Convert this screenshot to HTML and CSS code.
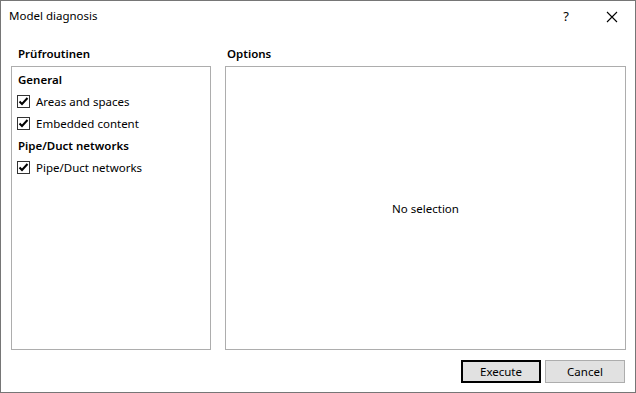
FILE: index.html
```html
<!DOCTYPE html>
<html lang="en">

<head>
  <meta charset="UTF-8" />
  <title>Model diagnosis</title>
  <link rel="stylesheet" href="styles.css">
</head>

<body>
  <div class="window">
    <div class="titlebar">
      <span class="title">Model diagnosis</span>
      <span class="tb-btn help">?</span>
      <span class="tb-btn close">
        <svg width="12" height="12" viewBox="0 0 12 12">
          <path d="M1 1 L11 11 M11 1 L1 11" stroke="#000" stroke-width="1.1" fill="none" />
        </svg>
      </span>
    </div>

    <div class="main">
      <div class="column left">
        <div class="label">Prüfroutinen</div>
        <div class="panel list">
          <div class="group">General</div>
          <label class="check-row">
            <span class="box">
              <svg width="11" height="11" viewBox="0 0 11 11">
                <polyline points="1.5,5.5 4,8 9.5,2" stroke="#000" stroke-width="2" fill="none" />
              </svg>
            </span>
            Areas and spaces
          </label>
          <label class="check-row">
            <span class="box">
              <svg width="11" height="11" viewBox="0 0 11 11">
                <polyline points="1.5,5.5 4,8 9.5,2" stroke="#000" stroke-width="2" fill="none" />
              </svg>
            </span>
            Embedded content
          </label>
          <div class="group">Pipe/Duct networks</div>
          <label class="check-row">
            <span class="box">
              <svg width="11" height="11" viewBox="0 0 11 11">
                <polyline points="1.5,5.5 4,8 9.5,2" stroke="#000" stroke-width="2" fill="none" />
              </svg>
            </span>
            Pipe/Duct networks
          </label>
        </div>
      </div>

      <div class="column right">
        <div class="label">Options</div>
        <div class="panel options">
          <span>No selection</span>
        </div>
      </div>
    </div>

    <div class="footer">
      <button class="btn default">Execute</button>
      <button class="btn">Cancel</button>
    </div>
  </div>
</body>

</html>
```

FILE: styles.css
```css
html,
body {
  margin: 0;
  padding: 0;
  background-color: #ffffff;
  font-family: 'Noto Sans', 'Open Sans', sans-serif;
  font-size: 11.5px;
  color: #000000;
}

.window {
  width: 636px;
  height: 393px;
  box-sizing: border-box;
  border: 1px solid #767676;
  display: flex;
  flex-direction: column;
}

.titlebar {
  height: 31px;
  display: flex;
  align-items: center;
  padding-left: 8px;
}

.title {
  flex: 1;
  padding-bottom: 2px;
}

.tb-btn {
  width: 46px;
  height: 31px;
  display: flex;
  align-items: center;
  justify-content: center;
}

.help {
  font-size: 13px;
  padding-bottom: 2px;
  box-sizing: border-box;
}

.main {
  display: flex;
  gap: 14px;
  padding: 0 9px 0 10px;
}

.column {
  display: flex;
  flex-direction: column;
}

.left {
  width: 200px;
}

.right {
  flex: 1;
}

.label {
  font-weight: 600;
  height: 34px;
  line-height: 20px;
  padding-top: 12px;
  box-sizing: border-box;
}

.left .label {
  padding-left: 7px;
}

.right .label {
  padding-left: 2px;
}

.panel {
  height: 284px;
  box-sizing: border-box;
  border: 1px solid #adadad;
}

.list {
  padding: 4px 5px;
}

.group {
  font-weight: 600;
  height: 22px;
  line-height: 18px;
  padding-left: 1px;
}

.check-row {
  display: flex;
  align-items: center;
  gap: 6px;
  height: 22px;
  margin-top: -3px;
  margin-bottom: 3px;
}

.box {
  width: 13px;
  height: 13px;
  box-sizing: border-box;
  border: 1px solid #333333;
  display: flex;
  align-items: center;
  justify-content: center;
}

.options {
  display: flex;
  align-items: center;
  justify-content: center;
}

.footer {
  display: flex;
  justify-content: flex-end;
  gap: 4px;
  padding: 10px 10px 0 0;
}

.btn {
  width: 80px;
  height: 23px;
  font-family: inherit;
  font-size: 11.5px;
  color: #000000;
  background-color: #e1e1e1;
  border: 1px solid #adadad;
  padding: 0;
  margin: 0;
}

.btn.default {
  border: 2px solid #000000;
}
```
